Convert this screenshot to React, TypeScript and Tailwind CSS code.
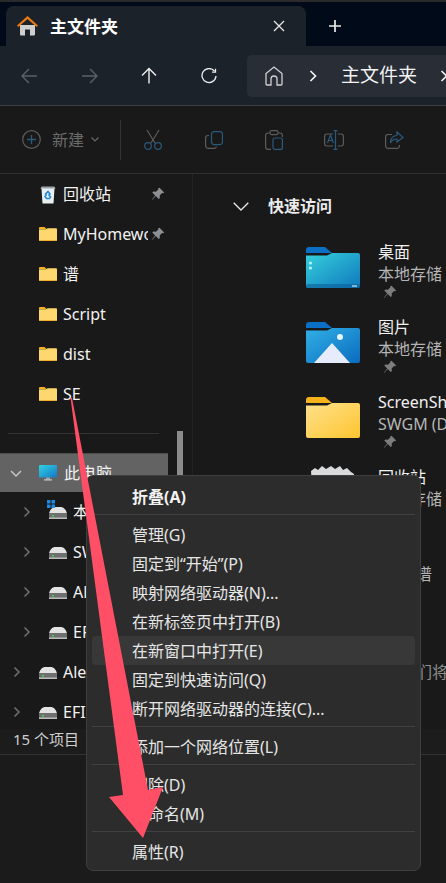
const FONT = "font-['Noto_Sans','Noto_Sans_CJK_SC',sans-serif]";

function Folder({ w = 18, h = 14 }: { w?: number; h?: number }) {
  return (
    <svg width={w} height={h} viewBox="0 0 18 14" className="shrink-0">
      <path d="M0 1a1 1 0 0 1 1-1h4.500l2 2H0z" fill="#f5b21b" />
      <path d="M0 2.200h7l1.600-1H17a1 1 0 0 1 1 1V13a1 1 0 0 1-1 1H1a1 1 0 0 1-1-1z" fill="#ffd76f" />
      <rect x="0" y="13" width="18" height="1" fill="#eeb02c" />
    </svg>
  );
}

function SmallBin() {
  return (
    <svg width="18" height="19" viewBox="0 0 18 19" className="shrink-0">
      <path d="M2.500 1.500h13l1 2.500H1.500z" fill="#9ba3a8" />
      <path d="M2.500 3.500h13L14.500 18.500h-11z" fill="#e9eef1" />
      <path d="M9 6.500l2 2.500-1 1 1.500 2-1 1.500H7.500l-1.500-2 1.200-1.500L6.500 9z" fill="none" stroke="#2388d8" strokeWidth="1.600" />
    </svg>
  );
}

function BigBin() {
  return (
    <svg width="45" height="46" viewBox="0 0 45 46" className="shrink-0">
      <path d="M1 6l4-3 3 2 4-4 4 3 5-3 4 3 5-3 3 4 4-2 4 4 3 2-3 39H4z" fill="#d8dadc" />
      <path d="M3 10h39l-3 36H6z" fill="#f2f3f4" />
    </svg>
  );
}

function BigFolder({ kind }: { kind: "desktop" | "pictures" | "yellow" }) {
  const id = `g-${kind}`;
  const stops =
    kind === "desktop"
      ? ["#35d0dc", "#0f78bd"]
      : kind === "pictures"
        ? ["#32b0e6", "#0a6cbf"]
        : ["#ffe08c", "#fdc52f"];
  const tab = kind === "yellow" ? "#f5b21b" : "#0b6fc6";
  return (
    <svg width="54" height="41" viewBox="0 0 54 41" className="shrink-0">
      <defs>
        <linearGradient id={id} x1="0" y1="0" x2="1" y2="1">
          <stop offset="0" stopColor={stops[0]} />
          <stop offset="1" stopColor={stops[1]} />
        </linearGradient>
      </defs>
      <path d="M0 3a3 3 0 0 1 3-3h16l7 6H0z" fill={tab} />
      <path d="M0 9V8.500h21l5-2.500h26a2 2 0 0 1 2 2v31a2 2 0 0 1-2 2H2a2 2 0 0 1-2-2z" fill={`url(#${id})`} />
      {kind === "desktop" && (
        <>
          <circle cx="4.500" cy="16" r="1.600" fill="#b9f1f4" />
          <circle cx="4.500" cy="21" r="1.600" fill="#b9f1f4" />
          <rect x="0" y="37" width="54" height="4" rx="2" fill="#0b5f99" opacity=".6" />
          <rect x="46" y="38" width="5" height="2" fill="#7fb6d6" />
        </>
      )}
      {kind === "pictures" && (
        <>
          <circle cx="34" cy="15" r="3" fill="#e6f4fb" />
          <path d="M8 41l18-20 18 20z" fill="#e6ecfb" />
        </>
      )}
    </svg>
  );
}

function Pin({ size = 14, color = "#8b9095" }: { size?: number; color?: string }) {
  return (
    <svg width={size} height={size} viewBox="0 0 14 14" className="shrink-0">
      <path d="M8.500.8l4.700 4.700-1.100.8-1-.3-2.500 2.500.3 2.400-1.200 1.100L4.800 9.100 1 13l-.3-.3L4.200 8.500 1.300 5.600l1.100-1.200 2.500.3 2.500-2.500-.2-1z" fill={color} />
    </svg>
  );
}

function Chevron({ open = false, className = "" }: { open?: boolean; className?: string }) {
  return (
    <svg width="14" height="14" viewBox="0 0 14 14" className={`shrink-0 ${className}`} fill="none" stroke={open ? "#c4c4c4" : "#707070"} strokeWidth="1.500">
      {open ? <path d="M2 5l5 5 5-5" /> : <path d="M4.500 2.500L9 7l-4.500 4.500" />}
    </svg>
  );
}

function Drive({ win = false }: { win?: boolean }) {
  return (
    <span className="relative block w-[18px] h-[14px] shrink-0">
      <svg width="18" height="12" viewBox="0 0 18 12" className="absolute left-0 top-[2px]">
        <path d="M0 6.500C1 2 4 0 6 0h6c2 0 5 2 6 6.500z" fill="#e3e3e3" />
        <rect x="0" y="6" width="18" height="6" rx="1" fill="#6f6f6f" />
        <rect x="0" y="10.500" width="18" height="1.500" fill="#bcbcbc" />
        <rect x="3" y="8" width="2" height="1.500" fill="#3ddc4a" />
      </svg>
      {win && (
        <svg width="8" height="8" viewBox="0 0 8 8" className="absolute left-[-2px] top-[-5px]">
          <path d="M0 0h3.500v3.500H0zM4.500 0H8v3.500H4.500zM0 4.500h3.500V8H0zM4.500 4.500H8V8H4.500z" fill="#1f8ae0" />
        </svg>
      )}
    </span>
  );
}

function Monitor() {
  return (
    <svg width="18" height="16" viewBox="0 0 18 16" className="shrink-0">
      <defs>
        <linearGradient id="mon" x1="0" y1="0" x2="1" y2="1">
          <stop offset="0" stopColor="#31d2e0" />
          <stop offset="1" stopColor="#1478c8" />
        </linearGradient>
      </defs>
      <rect x="0" y="0" width="18" height="12.500" rx="1" fill="url(#mon)" />
      <rect x="7" y="12.500" width="4" height="2" fill="#9aa4ad" />
      <rect x="5" y="14.300" width="8" height="1.200" fill="#c7ced4" />
    </svg>
  );
}

function SideRow({ icon, label, pin, pl, gap = 6, chevron, chevronMl }: { icon: React.ReactNode; label: string; pin?: boolean; pl: number; gap?: number; chevron?: boolean; chevronMl?: number }) {
  return (
    <div className="h-10 flex items-center relative">
      <div className="flex items-center min-w-0 w-full" style={{ paddingLeft: chevron ? chevronMl : pl }}>
        {chevron && <Chevron className="mr-[15px]" />}
        {icon}
        <span className="text-[16px] text-[#f2f2f2] whitespace-nowrap overflow-hidden w-[85px] leading-5" style={{ marginLeft: gap }}>{label}</span>
      </div>
      {pin && <span className="absolute left-[151px] top-[13px]"><Pin /></span>}
    </div>
  );
}

function QuickItem({ icon, title, sub, pin = true, iconClass = "mt-[6px]" }: { icon: React.ReactNode; title: string; sub: string; pin?: boolean; iconClass?: string }) {
  return (
    <div className="h-[75px] flex items-start pl-[113px]">
      <div className={`w-[54px] h-[41px] shrink-0 ${iconClass}`}>{icon}</div>
      <div className="ml-[18px] w-[100px] shrink-0 flex flex-col leading-[22px]">
        <span className="text-[16px] text-[#f0f0f0] whitespace-nowrap">{title}</span>
        <span className="text-[16px] text-[#b5b5b5] whitespace-nowrap">{sub}</span>
        {pin && <span className="ml-[5px]"><Pin size={14} color="#7d7d7d" /></span>}
      </div>
    </div>
  );
}

function MenuItem({ label, bold, hover }: { label: string; bold?: boolean; hover?: boolean }) {
  return (
    <div className={`h-[29px] mx-[5px] pl-[40px] flex items-center rounded-[4px] text-[16px] whitespace-nowrap ${bold ? "font-bold text-[#f4f4f4]" : "text-[#e6e6e6]"} ${hover ? "bg-[#383838]" : ""}`}>
      {label}
    </div>
  );
}

function Sep() {
  return <div className="h-px bg-[#414141] mx-[5px] mt-[3px] mb-[5px]" />;
}

const tool = "#5c5c5c";
const toolBlue = "#2a5a7c";

export default function App() {
  return (
    <div className={`relative w-[446px] h-[883px] overflow-hidden bg-[#1b1b1b] ${FONT}`}>
      {/* window */}
      <div className="flex flex-col h-[755px] border-b border-[#333333] bg-[#191919]">
        {/* tab strip */}
        <div className="h-[46px] bg-[#000a18] border-t-2 border-[#2a2a2a] pl-[6px] flex items-end shrink-0">
          <div className="w-[300px] h-10 bg-[#1c222a] rounded-t-[8px] flex items-center pl-[11px] pr-[21px]">
            <svg width="21" height="20" viewBox="0 0 21 20" className="shrink-0">
              <path d="M3 9v9.500a1 1 0 0 0 1 1h4v-6h5v6h4a1 1 0 0 0 1-1V9z" fill="#cfcfcf" />
              <path d="M10.500 0L0 9.500l1.300 1.500L10.500 3l9.200 8 1.300-1.500z" fill="#ee7a10" />
            </svg>
            <span className="ml-[12px] pt-[2px] text-[17px] font-bold text-white whitespace-nowrap">主文件夹</span>
            <svg width="12" height="12" viewBox="0 0 12 12" className="ml-auto" fill="none" stroke="#e8e8e8" strokeWidth="1.300">
              <path d="M1 1l10 10M11 1L1 11" />
            </svg>
          </div>
          <svg width="14" height="14" viewBox="0 0 14 14" className="ml-[22px] mb-[13px]" fill="none" stroke="#ececec" strokeWidth="1.700">
            <path d="M7 1v12M1 7h12" />
          </svg>
        </div>
        {/* nav bar */}
        <div className="h-[60px] bg-[#1c222a] border-b border-[#3b3f44] flex items-center pl-[21px] shrink-0">
          <svg width="17" height="16" viewBox="0 0 17 16" fill="none" stroke="#5d6167" strokeWidth="1.400"><path d="M16 8H1.500M8 1L1 8l7 7" /></svg>
          <svg width="17" height="16" viewBox="0 0 17 16" className="ml-[43px]" fill="none" stroke="#5d6167" strokeWidth="1.400"><path d="M1 8h14.500M9 1l7 7-7 7" /></svg>
          <svg width="16" height="17" viewBox="0 0 16 17" className="ml-[43px]" fill="none" stroke="#efefef" strokeWidth="1.400"><path d="M8 16.500V1.500M1 8.500l7-7 7 7" /></svg>
          <svg width="16" height="16" viewBox="0 0 16 16" className="ml-[44px]" fill="none" stroke="#efefef" strokeWidth="1.300"><path d="M13.500 3.200A7 7 0 1 0 15 8" /><path d="M14.500.8v3.400h-3.400" /></svg>
          <div className="ml-[30px] flex-1 h-[42px] bg-[#282d36] rounded-l-[5px] flex items-center pl-[18px] overflow-hidden">
            <svg width="18" height="20" viewBox="0 0 18 20" className="shrink-0" fill="none" stroke="#d2d2d2" strokeWidth="1.300"><path d="M1 18a1 1 0 0 0 1 1h4v-6a3 3 0 0 1 6 0v6h4a1 1 0 0 0 1-1V7.500L9 1 1 7.500z" /></svg>
            <svg width="8" height="12" viewBox="0 0 8 12" className="ml-[26px] shrink-0" fill="none" stroke="#f0f0f0" strokeWidth="1.700"><path d="M1.500 1l5 5-5 5" /></svg>
            <span className="ml-[24px] text-[19px] text-[#f2f2f2] whitespace-nowrap shrink-0">主文件夹</span>
            <svg width="8" height="12" viewBox="0 0 8 12" className="ml-[23px] shrink-0" fill="none" stroke="#f0f0f0" strokeWidth="1.700"><path d="M1.500 1l5 5-5 5" /></svg>
          </div>
        </div>
        {/* toolbar */}
        <div className="h-[68px] border-b border-[#303030] flex items-center pl-[22px] shrink-0 bg-[#191919]">
          <svg width="19" height="19" viewBox="0 0 19 19" fill="none" className="shrink-0"><circle cx="9.500" cy="9.500" r="8.800" stroke={tool} strokeWidth="1.200" /><path d="M9.500 5v9M5 9.500h9" stroke={toolBlue} strokeWidth="1.300" /></svg>
          <span className="ml-[11px] text-[16px] text-[#6b6b6b] whitespace-nowrap">新建</span>
          <svg width="8" height="5" viewBox="0 0 8 5" className="ml-[7px] shrink-0" fill="none" stroke="#6b6b6b" strokeWidth="1.100"><path d="M.5.500L4 4 7.500.500" /></svg>
          <div className="ml-[21px] w-px h-10 bg-[#333333] shrink-0" />
          <svg width="18" height="21" viewBox="0 0 18 21" className="ml-[23px] shrink-0" fill="none" strokeWidth="1.200"><path d="M3 1l8 13M15 1L7 14" stroke={tool} /><circle cx="4" cy="17" r="3.300" stroke={toolBlue} /><circle cx="14" cy="17" r="3.300" stroke={toolBlue} /></svg>
          <svg width="18" height="18" viewBox="0 0 18 18" className="ml-[43px] shrink-0" fill="none" strokeWidth="1.200"><rect x="6.500" y=".6" width="11" height="13" rx="2.500" stroke={toolBlue} /><path d="M4 4.500H3a2.500 2.500 0 0 0-2.400 2.500v7.500A2.800 2.800 0 0 0 3.500 17.400H9a2.500 2.500 0 0 0 2.500-2" stroke={tool} /></svg>
          <svg width="18" height="20" viewBox="0 0 18 20" className="ml-[42px] shrink-0" fill="none" strokeWidth="1.200"><path d="M5 3H3a2.400 2.400 0 0 0-2.400 2.400V17A2.400 2.400 0 0 0 3 19.400h3" stroke={tool} /><rect x="5" y=".6" width="8" height="4" rx="1.500" stroke={tool} /><path d="M13 3h2a2.400 2.400 0 0 1 2.400 2.400V7" stroke={tool} /><rect x="8" y="8" width="9.400" height="11.400" rx="2" stroke={toolBlue} /></svg>
          <svg width="20" height="20" viewBox="0 0 20 20" className="ml-[41px] shrink-0" fill="none" strokeWidth="1.200"><path d="M9 4H3a2.500 2.500 0 0 0-2.400 2.500v7A2.500 2.500 0 0 0 3 16h6M14 4h3a2.500 2.500 0 0 1 2.400 2.500v7A2.500 2.500 0 0 1 17 16h-3" stroke={tool} /><path d="M3.500 13l3-8 3 8M4.500 10.500h4" stroke={toolBlue} /><path d="M11.500.6v18.800M9.500.6h4M9.500 19.400h4" stroke={toolBlue} /></svg>
          <svg width="19" height="18" viewBox="0 0 19 18" className="ml-[41px] shrink-0" fill="none" strokeWidth="1.200"><path d="M7 3.500H3A2.400 2.400 0 0 0 .6 6v9A2.400 2.400 0 0 0 3 17.400h9a2.400 2.400 0 0 0 2.400-2.400v-1" stroke={tool} /><path d="M12 1l6 5.500L12 11V8C9 8 7 9 5.500 12 5.500 7 8 4.500 12 4.500z" stroke={toolBlue} /></svg>
        </div>
        {/* body */}
        <div className="flex-1 min-h-0 flex overflow-hidden">
          <aside className="w-[193px] shrink-0 flex border-r border-[#232323]">
            <div className="w-[168px] shrink-0 overflow-hidden">
              <SideRow pl={39} icon={<SmallBin />} label="回收站" pin />
              <SideRow pl={39} icon={<Folder />} label="MyHomework" pin />
              <SideRow pl={39} icon={<Folder />} label="谱" />
              <SideRow pl={39} icon={<Folder />} label="Script" />
              <SideRow pl={39} icon={<Folder />} label="dist" />
              <SideRow pl={39} icon={<Folder />} label="SE" />
              <div className="h-px bg-[#333333] ml-[8px] mr-[9px] mt-[19px] mb-[19px]" />
              <div className="h-[39px] bg-[#636363] flex items-center pl-[9px] border-t border-[#4d4d4d]">
                <Chevron open />
                <span className="ml-[16px]"><Monitor /></span>
                <span className="ml-[7px] text-[16px] text-[#f2f2f2] whitespace-nowrap">此电脑</span>
              </div>
              <SideRow chevron chevronMl={20} pl={20} icon={<Drive win />} label="本地磁盘" />
              <SideRow chevron chevronMl={20} pl={20} icon={<Drive />} label="SWGM" />
              <SideRow chevron chevronMl={20} pl={20} icon={<Drive />} label="Alex" />
              <SideRow chevron chevronMl={20} pl={20} icon={<Drive />} label="EFI" />
              <SideRow chevron chevronMl={10} pl={10} icon={<Drive />} label="Alex" />
              <SideRow chevron chevronMl={10} pl={10} icon={<Drive />} label="EFI" />
            </div>
            <div className="w-[6px] ml-[9px] mt-[257px] h-[50px] bg-[#8c8c8c] shrink-0" />
          </aside>
          <main className="flex-1 min-w-0 overflow-hidden">
            <div className="h-[64px] flex items-center pl-[40px]">
              <svg width="16" height="9" viewBox="0 0 16 9" fill="none" stroke="#e8e8e8" strokeWidth="1.300"><path d="M.7.700L8 8l7.300-7.300" /></svg>
              <span className="ml-[19px] text-[16px] font-bold text-[#ececec] whitespace-nowrap">快速访问</span>
            </div>
            <div className="pt-[3px]">
              <QuickItem icon={<BigFolder kind="desktop" />} title="桌面" sub="本地存储" />
              <QuickItem icon={<BigFolder kind="pictures" />} title="图片" sub="本地存储" />
              <QuickItem icon={<BigFolder kind="yellow" />} title="ScreenShots" sub="SWGM (D:)" />
              <QuickItem icon={<BigBin />} iconClass="pl-[4px] -mt-[1px]" title="回收站" sub="本地存储" />
              <QuickItem icon={<BigFolder kind="yellow" />} title="SE" sub="文档\谱" pin={false} />
            </div>
            <div className="mt-[44px] pl-[127px] text-[16px] text-[#8f8f8f] whitespace-nowrap">固定文件后我们将显示</div>
          </main>
        </div>
        {/* status */}
        <div className="h-[25px] shrink-0 bg-[#1c1c1c] flex items-center pl-[13px] pb-[5px] text-[15px] text-[#cfcfcf] whitespace-nowrap">15 个项目</div>
      </div>
      {/* context menu */}
      <div className="absolute left-[86px] top-[475px] w-[335px] h-[396px] bg-[#2c2c2c] border border-[#3f3f3f] rounded-[7px] pt-[6px]">
        <MenuItem bold label="折叠(A)" />
        <Sep />
        <MenuItem label="管理(G)" />
        <MenuItem label="固定到“开始”(P)" />
        <MenuItem label="映射网络驱动器(N)..." />
        <MenuItem label="在新标签页中打开(B)" />
        <MenuItem hover label="在新窗口中打开(E)" />
        <MenuItem label="固定到快速访问(Q)" />
        <MenuItem label="断开网络驱动器的连接(C)..." />
        <Sep />
        <MenuItem label="添加一个网络位置(L)" />
        <Sep />
        <MenuItem label="删除(D)" />
        <MenuItem label="重命名(M)" />
        <Sep />
        <MenuItem label="属性(R)" />
      </div>
      {/* annotation arrow */}
      <svg width="446" height="883" viewBox="0 0 446 883" className="absolute inset-0 pointer-events-none">
        <path d="M70.500 398L72 398L148 790L163 787L143 838L109 797L123 795z" fill="#ff4f66" />
      </svg>
    </div>
  );
}
